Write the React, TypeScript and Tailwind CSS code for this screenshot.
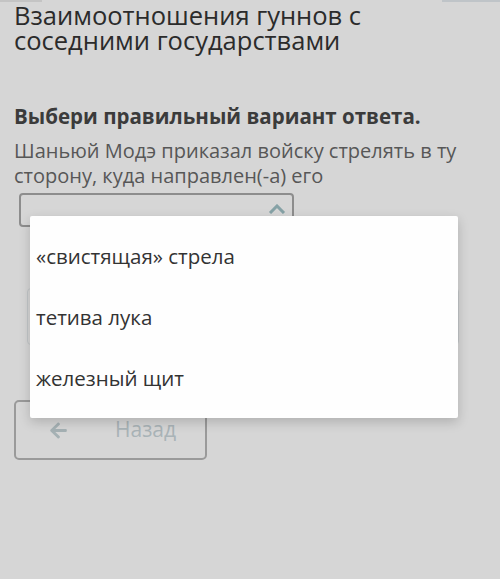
import { FaArrowLeft } from "react-icons/fa";

const options = ["«свистящая» стрела", "тетива лука", "железный щит"];

export default function App() {
  return (
    <div className="relative h-[579px] w-[500px] overflow-hidden bg-[#d6d6d6] font-['Open_Sans',sans-serif]">
      {/* faint header edge */}
      <div className="flex justify-between">
        <div className="h-[2px] w-[42px] bg-[#c4c4c4]" />
        <div className="h-[2px] w-[58px] bg-[#bfc4c8]" />
      </div>

      <div className="px-[14px]">
        <h1 className="mt-[1px] text-[25.5px] leading-[25px] text-[#2b2b2b]">
          Взаимоотношения гуннов с<br />соседними государствами
        </h1>

        <p className="mt-[50px] text-[20.5px] font-bold leading-[26px] text-[#3b3b3b]">
          Выбери правильный вариант ответа.
        </p>

        <p className="mt-[9px] text-[20px] leading-[25px] text-[#575757]">
          Шаньюй Модэ приказал войску стрелять в ту
          <br />
          сторону, куда направлен(-а) его
        </p>

        {/* select */}
        <div className="ml-[5px] mt-[5px] flex h-[34px] w-[275px] items-start justify-end rounded-[4px] border-2 border-[#8d8d8d] pr-[6px] pt-[9px]">
          <svg width="18" height="10" viewBox="0 0 18 10" className="text-[#86a2a6]">
            <path d="M2 9 L9 2 L16 9" fill="none" stroke="currentColor" strokeWidth="3" />
          </svg>
        </div>

        {/* box behind the menu */}
        <div className="ml-[13px] mt-[61px] h-[57px] w-[432px] rounded-[4px] border border-[#c2c6c8]" />

        {/* back button */}
        <button className="mt-[55px] flex h-[60px] w-[193px] items-center rounded-[5px] border-2 border-[#9a9a9a] pl-[33px] text-[21px] text-[#a9b3b7]">
          <FaArrowLeft size={19} className="text-[#a5b1b4]" />
          <span className="ml-[47px]">Назад</span>
        </button>
      </div>

      {/* open dropdown menu */}
      <ul className="absolute left-[30px] top-[216px] flex h-[202px] w-[428px] flex-col justify-around rounded-[2px] bg-[#fefefe] py-[10px] pl-[6px] shadow-[0_4px_12px_rgba(0,0,0,0.18)]">
        {options.map((o) => (
          <li key={o} className="text-[20.5px] leading-[26px] text-[#333333]">
            {o}
          </li>
        ))}
      </ul>
    </div>
  );
}
